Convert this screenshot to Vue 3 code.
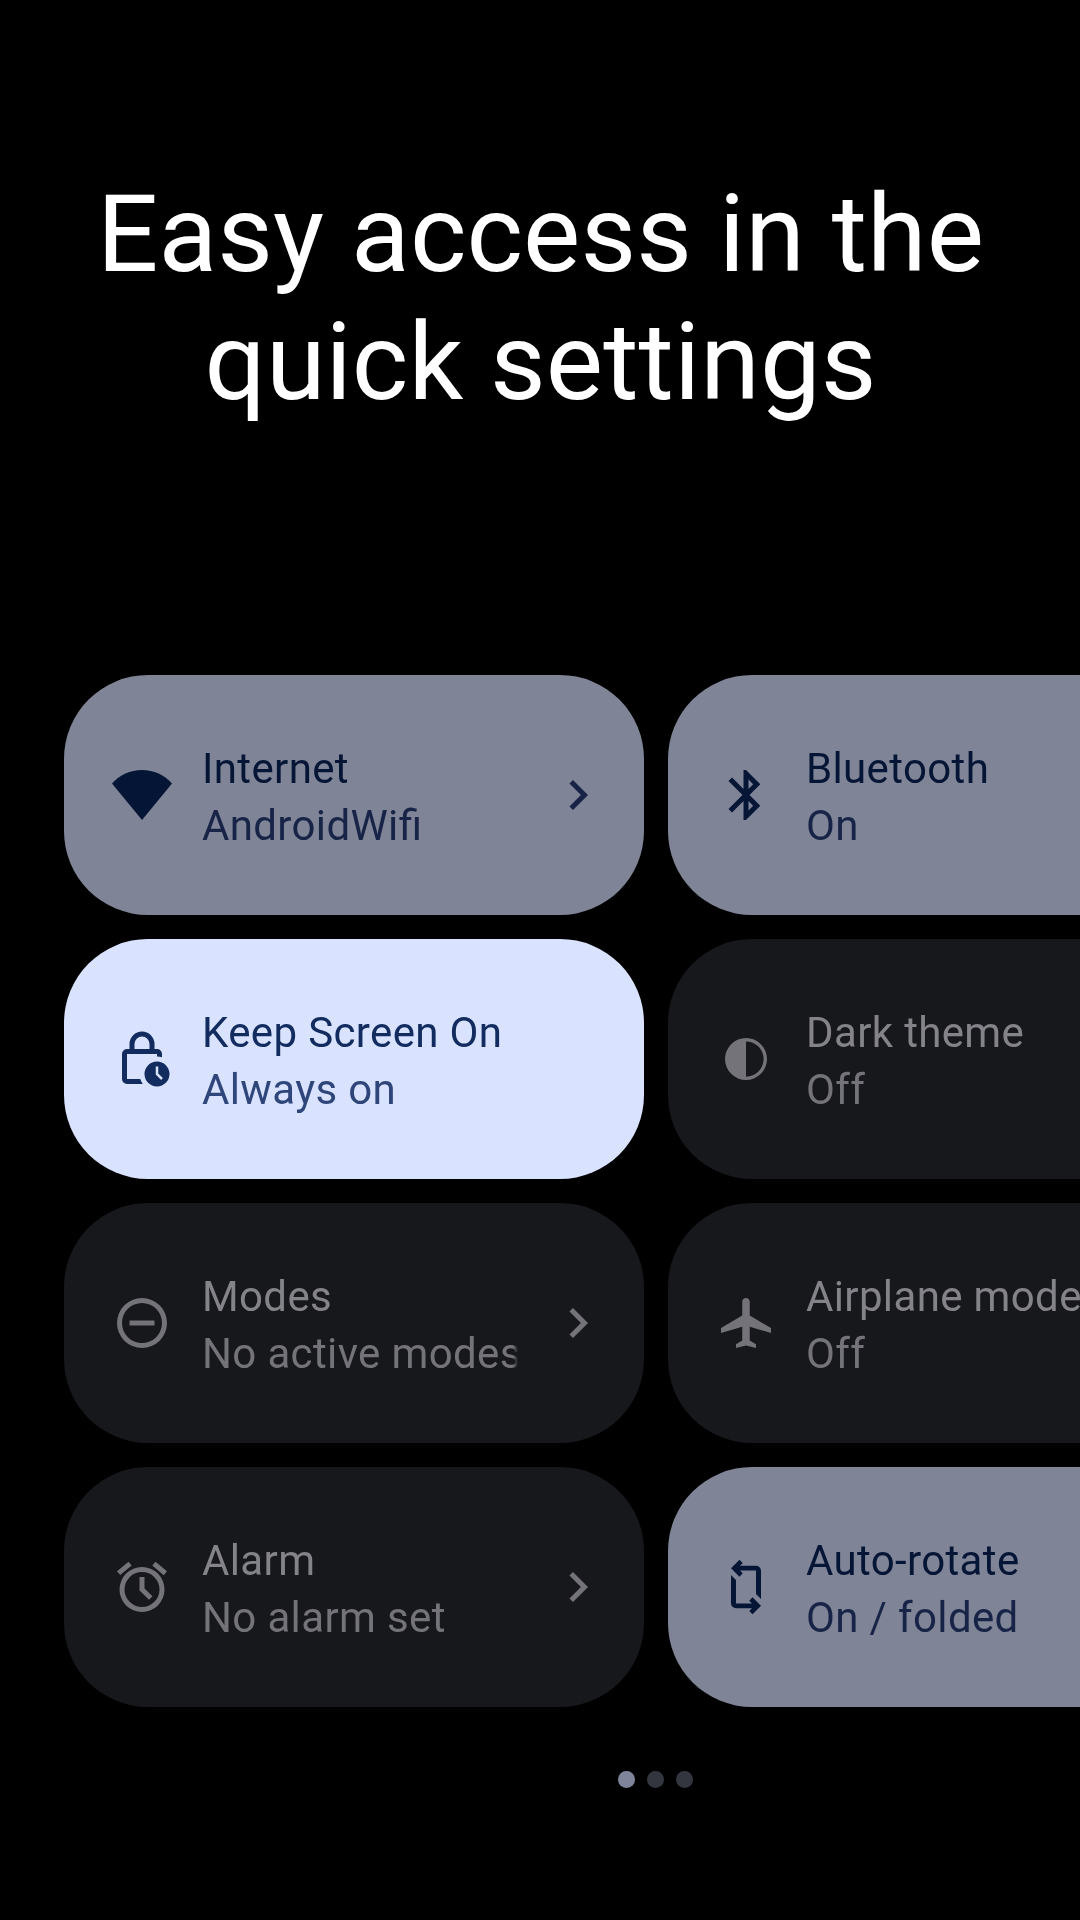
<script setup>
const tiles = [
  { name: 'Internet', state: 'AndroidWifi', tone: 'active', icon: 'wifi', arrow: true },
  { name: 'Bluetooth', state: 'On', tone: 'active', icon: 'bluetooth' },
  { name: 'Keep Screen On', state: 'Always on', tone: 'focus', icon: 'lock' },
  { name: 'Dark theme', state: 'Off', tone: 'idle', icon: 'contrast' },
  { name: 'Modes', state: 'No active modes', tone: 'idle', icon: 'modes', arrow: true },
  { name: 'Airplane mode', state: 'Off', tone: 'idle', icon: 'airplane' },
  { name: 'Alarm', state: 'No alarm set', tone: 'idle', icon: 'alarm', arrow: true },
  { name: 'Auto-rotate', state: 'On / folded', tone: 'active', icon: 'rotate' },
]
const icons = {
  wifi: 'M12 22L24 7.4C21 4 16.7 2 12 2S3 4 0 7.4z',
  bluetooth: 'M17.71 7.71L12 2h-1v7.59L6.41 5 5 6.41 10.59 12 5 17.59 6.41 19 11 14.41V22h1l5.71-5.71-4.3-4.29 4.3-4.29zM13 5.83l1.88 1.88L13 9.59V5.83zm1.88 10.46L13 18.17v-3.76l1.88 1.88z',
  lock: 'M20 11.3V10a2 2 0 0 0-2-2h-1V6a5 5 0 0 0-10 0v2H6a2 2 0 0 0-2 2v10a2 2 0 0 0 2 2h6.3c-.4-.6-.8-1.3-1-2H6V10h12v1c.7 0 1.4.1 2 .3zM9 6a3 3 0 0 1 6 0v2H9zM18 13a5 5 0 1 0 0 10 5 5 0 0 0 0-10zM19.65 20.35L17.5 18.2V15h1v2.79l1.85 1.85z',
  contrast: 'M12 3.6a8.4 8.4 0 1 0 0 16.8 8.4 8.4 0 0 0 0-16.8zM12 4.95a7.05 7.05 0 0 1 0 14.1z',
  modes: 'M12 2a10 10 0 1 0 0 20 10 10 0 0 0 0-20zM12 4a8 8 0 1 1 0 16 8 8 0 0 1 0-16zM7 11h10v2H7z',
  airplane: 'M22 16v-2l-8.5-5V3.5c0-.83-.67-1.5-1.5-1.5s-1.5.67-1.5 1.5V9L2 14v2l8.5-2.5V19L8 20.5V22l4-1 4 1v-1.5L13.5 19v-5.5L22 16z',
  alarm: 'M22 5.72l-4.6-3.86-1.29 1.53 4.6 3.86L22 5.72zM7.88 3.39L6.6 1.86 2 5.71l1.29 1.53 4.59-3.85zM11 8h2v4.6l3.2 3.1-1.4 1.4L11 13.4zM12 4a9 9 0 1 0 0 18 9 9 0 0 0 0-18zM12 6a7 7 0 1 1 0 14 7 7 0 0 1 0-14z',
  rotate: 'M6 4.5L9.4 1.1l1.3 1.3L9.6 3.5H16a2 2 0 0 1 2 2v11.3l-2-2V5.4H9.6l1.1 1.1-1.3 1.4zM18 19.5l-3.4 3.4-1.3-1.3 1.1-1.1H8a2 2 0 0 1-2-2V7.2l2 2v9.4h6.4l-1.1-1.1 1.3-1.4z',
}
</script>

<template>
  <main class="screen">
    <h1 class="title">Easy access in the<br />quick settings</h1>
    <section class="tiles">
      <article v-for="t in tiles" :key="t.name" class="tile" :class="t.tone">
        <svg class="icon" viewBox="0 0 24 24"><path :d="icons[t.icon]" fill-rule="evenodd" /></svg>
        <div class="label">
          <div class="name">{{ t.name }}</div>
          <div class="state">{{ t.state }}</div>
        </div>
        <svg v-if="t.arrow" class="arrow" viewBox="0 0 24 24"><path d="M8.59 16.59L13.17 12 8.59 7.41 10 6l6 6-6 6z" /></svg>
      </article>
    </section>
    <nav class="dots"><i class="on"></i><i></i><i></i></nav>
  </main>
</template>

<style>
body { background: #000; }
</style>

<style scoped>
.screen {
  width: 1080px;
  height: 1920px;
  box-sizing: border-box;
  padding-top: 170px;
  background: #000;
  overflow: hidden;
  font-family: Roboto, "Liberation Sans", sans-serif;
}
.title {
  margin: 0;
  padding-left: 1px;
  height: 505px;
  color: #fff;
  font-size: 108px;
  font-weight: 400;
  line-height: 128px;
  letter-spacing: 0.06px;
  text-align: center;
}
.tiles {
  display: grid;
  grid-template-columns: 580px 580px;
  grid-auto-rows: 240px;
  gap: 24px;
  margin-left: 64px;
}
.tile {
  display: flex;
  align-items: center;
  box-sizing: border-box;
  padding: 0 36px 0 48px;
  border-radius: 84px;
}
.icon, .arrow {
  flex: none;
  width: 60px;
  height: 60px;
  fill: var(--icon);
}
.arrow { fill: var(--state); }
.label {
  flex: 1;
  min-width: 0;
  margin: 0 30px;
  padding-top: 4px;
  overflow: hidden;
  white-space: nowrap;
  font-size: 42px;
  line-height: 57px;
  letter-spacing: 0.36px;
  font-feature-settings: "liga" 1;
  mask-image: linear-gradient(to right, #000 calc(100% - 5px), transparent);
}
.name { color: var(--name); }
.state { color: var(--state); }
.active { background: #7f8496; --icon: #051536; --name: #051536; --state: #172447; }
.focus { background: #d9e2ff; --icon: #122c60; --name: #122c60; --state: #2e467a; }
.idle { background: #17181b; --icon: #747379; --name: #848389; --state: #747379; }
.dots {
  display: flex;
  gap: 12.4px;
  margin: 64px 0 0 618.4px;
}
.dots i {
  width: 16.6px;
  height: 16.6px;
  border-radius: 50%;
  background: #33363f;
}
.dots .on { background: #80849a; }
</style>
